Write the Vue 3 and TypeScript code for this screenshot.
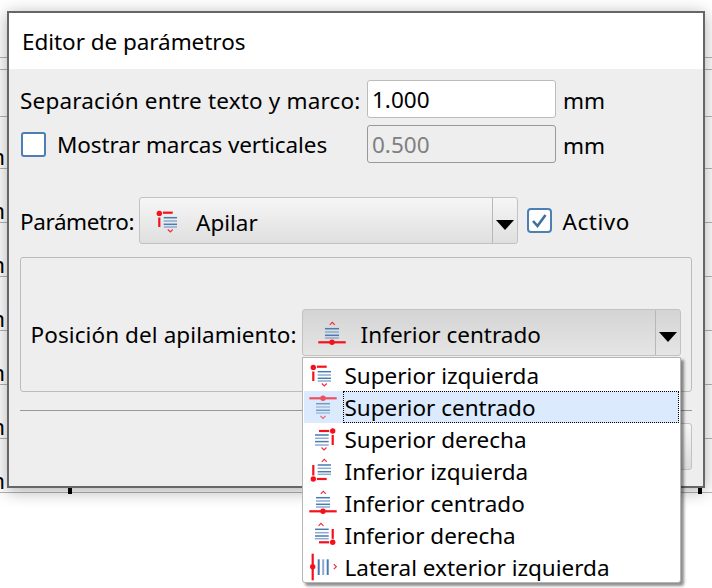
<script setup lang="ts">
type Seg = [number, number, number, number]
interface Icon {
  red: Seg[]
  blue: Seg[]
  dot: [number, number]
  chev: string
}

const hLines = (x1: number, x2: number, ys: number[]): Seg[] => ys.map((y) => [x1, y, x2, y] as Seg)
const up = (x: number, y: number) => `M${x - 2.5} ${y + 1.5}L${x} ${y - 1}L${x + 2.5} ${y + 1.5}`
const down = (x: number, y: number) => `M${x - 2.5} ${y - 1.5}L${x} ${y + 1}L${x + 2.5} ${y - 1.5}`

const icons: Record<string, Icon> = {
  topLeft: {
    red: [[9.3, 12.5, 9.3, 22], [12.9, 7.7, 22.7, 7.7]],
    blue: hLines(13.7, 27, [12.7, 16, 19.3, 22]),
    dot: [9.3, 8.4],
    chev: down(20.3, 26),
  },
  topCenter: {
    red: [[5.3, 7.3, 32.7, 7.3]],
    blue: hLines(12, 26, [12.7, 16, 19.3, 22]),
    dot: [19, 7.3],
    chev: down(19, 26.5),
  },
  topRight: {
    red: [[28.7, 12, 28.7, 22], [15, 8, 25.2, 8]],
    blue: hLines(11, 24.7, [12, 15.3, 18.6, 22]),
    dot: [28.7, 8],
    chev: down(20, 26),
  },
  bottomLeft: {
    red: [[9.3, 10, 9.3, 20.5], [12.9, 24, 22.7, 24]],
    blue: hLines(13.7, 27, [10, 13.3, 16.7, 19.3]),
    dot: [9.3, 24],
    chev: up(20.3, 5.3),
  },
  bottomCenter: {
    red: [[5.3, 24.3, 32.7, 24.3]],
    blue: hLines(12, 26, [10.7, 14, 17.3, 20]),
    dot: [19, 24.3],
    chev: up(19.3, 5.3),
  },
  bottomRight: {
    red: [[28.7, 10, 28.7, 19.8], [15, 23.3, 25.2, 23.3]],
    blue: hLines(11, 24.7, [10.3, 13.7, 17, 19.7]),
    dot: [28.7, 23.3],
    chev: up(17, 5.3),
  },
  side: {
    red: [[8.7, 2.7, 8.7, 29.3]],
    blue: [[14.7, 8.3, 14.7, 24], [19.2, 8.3, 19.2, 24], [23.7, 8.3, 23.7, 24]],
    dot: [8.7, 15.7],
    chev: 'M29.8 13.2L32.3 15.7L29.8 18.2',
  },
}

const options = [
  { label: 'Superior izquierda', icon: 'topLeft' },
  { label: 'Superior centrado', icon: 'topCenter', active: true },
  { label: 'Superior derecha', icon: 'topRight' },
  { label: 'Inferior izquierda', icon: 'bottomLeft' },
  { label: 'Inferior centrado', icon: 'bottomCenter' },
  { label: 'Inferior derecha', icon: 'bottomRight' },
  { label: 'Lateral exterior izquierda', icon: 'side' },
]

const blueColor = (i: number) => (i % 2 === 0 ? '#4a7ab2' : '#8aabd2')
const backRows = [12, 47, 52, 54, 54, 54, 54, 54, 54, 2]
</script>

<template>
  <div class="screen">
    <div class="back">
      <div class="first-line"></div>
      <div v-for="(h, i) in backRows" :key="i" class="back-row" :style="{ height: h + 'px' }">
        <span v-if="i > 1 && i < 9" class="cut">m</span>
      </div>
    </div>
    <i class="tick tick-a"></i>
    <i class="tick tick-b"></i>

    <section class="dialog">
      <header class="title">Editor de parámetros</header>
      <div class="body">
        <div class="field-row">
          <label class="lbl lbl-sep"><span class="txt-sep">Separación entre texto y marco:</span></label>
          <div class="input">1.000</div>
          <span class="unit">mm</span>
        </div>
        <div class="field-row second">
          <label class="lbl lbl-sep check-lbl"><span class="check"></span><span class="txt-show">Mostrar marcas verticales</span></label>
          <div class="input disabled"><span class="nudge">0.500</span></div>
          <span class="unit">mm</span>
        </div>

        <div class="param-row">
          <label class="lbl txt-param">Parámetro:</label>
          <div class="combo light">
            <div class="combo-main">
              <svg class="ico" viewBox="0 0 40 32" width="40" height="32">
                <line v-for="(s, i) in icons.topLeft.blue" :key="i" :x1="s[0]" :y1="s[1]" :x2="s[2]" :y2="s[3]" :stroke="blueColor(i)" stroke-width="1.5" />
                <line v-for="(s, i) in icons.topLeft.red" :key="'r' + i" :x1="s[0]" :y1="s[1]" :x2="s[2]" :y2="s[3]" stroke="#f5101c" stroke-width="2.2" />
                <circle :cx="icons.topLeft.dot[0]" :cy="icons.topLeft.dot[1]" r="2.7" fill="#f5101c" />
                <path :d="icons.topLeft.chev" fill="none" stroke="#ee3040" stroke-width="1.2" />
              </svg>
              <span class="combo-text">Apilar</span>
            </div>
            <div class="combo-arrow"><i class="tri"></i></div>
          </div>
          <div class="active-check">
            <svg viewBox="0 0 25 25" width="25" height="25" class="checked">
              <rect x="1" y="1" width="23" height="23" rx="3" fill="#fff" stroke="#4d7fb4" stroke-width="2" />
              <path d="M6 13L10.5 18L18.5 7" fill="none" stroke="#3f6f9f" stroke-width="2.6" />
            </svg>
            <span class="lbl txt-active">Activo</span>
          </div>
        </div>

        <div class="group">
          <label class="lbl txt-pos">Posición del apilamiento:</label>
          <div class="combo dark">
            <div class="combo-main">
              <svg class="ico low" viewBox="0 0 40 32" width="40" height="32">
                <line v-for="(s, i) in icons.bottomCenter.blue" :key="i" :x1="s[0]" :y1="s[1]" :x2="s[2]" :y2="s[3]" :stroke="blueColor(i)" stroke-width="1.5" />
                <line v-for="(s, i) in icons.bottomCenter.red" :key="'r' + i" :x1="s[0]" :y1="s[1]" :x2="s[2]" :y2="s[3]" stroke="#f5101c" stroke-width="2.2" />
                <circle :cx="icons.bottomCenter.dot[0]" :cy="icons.bottomCenter.dot[1]" r="2.7" fill="#f5101c" />
                <path :d="icons.bottomCenter.chev" fill="none" stroke="#ee3040" stroke-width="1.2" />
              </svg>
              <span class="combo-text">Inferior centrado</span>
            </div>
            <div class="combo-arrow"><i class="tri"></i></div>
          </div>
        </div>

        <div class="sep"></div>
        <div class="btn-row"><div class="btn"></div></div>
      </div>
    </section>

    <ul class="popup">
      <li v-for="o in options" :key="o.label" class="opt" :class="{ active: o.active }">
        <svg class="ico" :class="{ faded: o.active }" viewBox="0 0 40 32" width="40" height="32">
          <line v-for="(s, i) in icons[o.icon].blue" :key="i" :x1="s[0]" :y1="s[1]" :x2="s[2]" :y2="s[3]" :stroke="blueColor(i)" :stroke-width="o.icon === 'side' ? 2 : 1.5" />
          <line v-for="(s, i) in icons[o.icon].red" :key="'r' + i" :x1="s[0]" :y1="s[1]" :x2="s[2]" :y2="s[3]" stroke="#f5101c" stroke-width="2.2" />
          <circle :cx="icons[o.icon].dot[0]" :cy="icons[o.icon].dot[1]" r="2.7" fill="#f5101c" />
          <path :d="icons[o.icon].chev" fill="none" stroke="#ee3040" stroke-width="1.2" />
        </svg>
        <span class="opt-text">{{ o.label }}</span>
      </li>
    </ul>
  </div>
</template>

<style>
html, body { margin: 0; background: #fff; }
</style>

<style scoped>
.screen {
  position: relative;
  width: 712px;
  height: 588px;
  overflow: hidden;
  background: #fff;
  color: #000;
  font-family: "Noto Sans", sans-serif;
  font-size: 22.5px;
}
.first-line { height: 57px; }
.back-row {
  box-sizing: border-box;
  border-top: 1px solid #b4b4b4;
  display: flex;
  align-items: flex-end;
  overflow: hidden;
}
.cut { margin-left: -16px; line-height: 22px; }
.tick { position: absolute; top: 486px; width: 4px; height: 8px; background: #000; }
.tick-a { left: 68px; }
.tick-b { left: 698px; }

.dialog {
  position: absolute;
  left: 7px;
  top: 11px;
  width: 698px;
  height: 477px;
  box-sizing: border-box;
  border: 2px solid #666;
  background: #eee;
  box-shadow: 0 3px 16px rgba(0, 0, 0, 0.32);
  display: flex;
  flex-direction: column;
}
.title {
  height: 56px;
  flex: none;
  background: #fff;
  display: flex;
  align-items: center;
  padding-left: 13px;
  letter-spacing: -0.05px;
}
.body { padding: 11px 11px 0 11px; display: flex; flex-direction: column; }
.field-row { display: flex; align-items: center; height: 38px; }
.second { margin-top: 7px; }
.lbl { white-space: nowrap; }
.lbl-sep { width: 347px; flex: none; }
.txt-sep { letter-spacing: 0.17px; padding-top: 2px; display: block; }
.txt-show { letter-spacing: -0.08px; }
.txt-param { letter-spacing: -0.4px; padding-top: 2px; }
.txt-active { letter-spacing: 0.55px; padding-top: 2px; }
.txt-pos { letter-spacing: 0.09px; padding-top: 2px; }
.check-lbl { display: flex; align-items: center; padding-left: 1px; box-sizing: border-box; }
.check {
  width: 25px;
  height: 25px;
  box-sizing: border-box;
  border: 2px solid #4d7fb4;
  border-radius: 3px;
  background: #fff;
  margin-right: 11px;
}
.input {
  width: 189px;
  height: 38px;
  box-sizing: border-box;
  border: 1.5px solid #bcbcbc;
  border-radius: 3px;
  background: #fff;
  padding-left: 4px;
  display: flex;
  align-items: center;
}
.nudge { padding-top: 1px; }
.disabled { background: #eee; border-color: #999; color: #808080; }
.unit { margin-left: 7px; padding-top: 3px; }
.param-row { display: flex; align-items: center; margin-top: 34px; height: 47px; }
.combo {
  height: 47px;
  box-sizing: border-box;
  border: 1.5px solid #c2c2c2;
  border-radius: 3px;
  display: flex;
  flex: none;
}
.light { width: 379px; margin-left: 5px; background: linear-gradient(#f6f6f6, #dfdfdf); }
.dark { width: 379px; margin-left: 5px; background: linear-gradient(#d4d4d4, #e5e5e5); }
.combo-main { flex: 1; display: flex; align-items: center; padding-left: 10px; }
.combo-text { padding-top: 3px; }
.ico { flex: none; margin-right: 6px; }
.low { margin-top: 3px; margin-right: 8px; }
.combo-arrow {
  width: 25px;
  flex: none;
  box-sizing: border-box;
  border-left: 1.5px solid #b8b8b8;
  display: flex;
  align-items: center;
  justify-content: center;
}
.tri {
  width: 0;
  height: 0;
  border-left: 9px solid transparent;
  border-right: 9px solid transparent;
  border-top: 10px solid #000;
  margin-top: 8px;
}
.active-check { display: flex; align-items: center; gap: 11px; margin-left: 8.5px; }
.checked { flex: none; }
.group {
  margin-top: 13px;
  height: 135px;
  box-sizing: border-box;
  border: 1.5px solid #bcbcbc;
  border-radius: 3px;
  display: flex;
  align-items: flex-start;
  padding: 51px 0 0 9.5px;
}
.group > .lbl { line-height: 47px; }
.sep { margin-top: 18px; height: 1px; background: #999; }
.btn-row { display: flex; justify-content: flex-end; margin-top: 12px; }
.btn {
  width: 130px;
  height: 47px;
  box-sizing: border-box;
  border: 1.5px solid #c2c2c2;
  border-radius: 3px;
  background: linear-gradient(#f6f6f6, #dcdcdc);
}

.popup {
  position: absolute;
  left: 302px;
  top: 357px;
  width: 379px;
  height: 226px;
  box-sizing: border-box;
  margin: 0;
  padding: 1px 1px 0;
  list-style: none;
  background: #fff;
  border: 1.5px solid #b4b4b4;
  border-radius: 0 0 3px 3px;
  box-shadow: 3px 3px 3px rgba(0, 0, 0, 0.45);
}
.opt { height: 32px; display: flex; align-items: stretch; }
.opt .ico { margin-right: -1.5px; }
.opt-text { flex: 1; display: flex; align-items: center; padding-left: 1px; border: 1px solid transparent; box-sizing: border-box; white-space: nowrap; }
.active { background: #dbeafc; }
.active .opt-text { border: 1px dotted #000; }
.faded { opacity: 0.7; }
</style>
